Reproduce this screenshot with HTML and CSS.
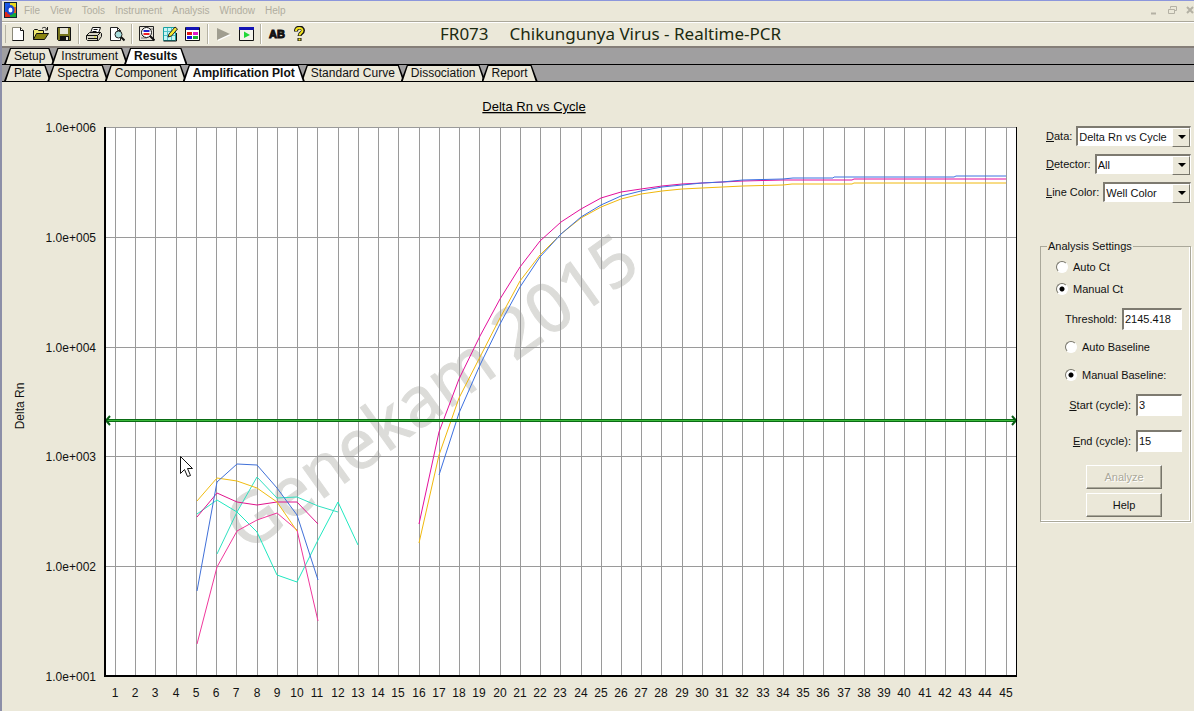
FILE: index.html
```html
<!DOCTYPE html>
<html lang="en">
<head>
    <meta charset="UTF-8">
    <meta name="viewport" content="width=device-width, initial-scale=1.0">
    <title>FR073 Chikungunya Virus - Realtime-PCR</title>
    <link rel="stylesheet" href="styles.css">
</head>
<body>
    <!-- Menu -->
    <nav class="menubar">
        <svg class="app-icon" width="13" height="16" viewBox="0 0 13 16">
            <rect width="13" height="16" fill="#123"/>
            <path d="M1 1h5v14H1z" fill="#1a58e8"/>
            <path d="M6 1h6v5H6z" fill="#e8d820"/>
            <path d="M1 10h5v5H1z" fill="#e02818"/>
            <path d="M6 10h6v5H6z" fill="#18a838"/>
            <path d="M9 5h3v6H9z" fill="#e86018"/>
            <ellipse cx="6.5" cy="8" rx="4" ry="5" fill="#1848d0"/>
            <ellipse cx="6.5" cy="8" rx="2" ry="2.500" fill="#fff"/>
        </svg>
        <button>File</button>
        <button>View</button>
        <button>Tools</button>
        <button>Instrument</button>
        <button>Analysis</button>
        <button>Window</button>
        <button>Help</button>
        <svg class="window-controls" width="44" height="12" viewBox="0 0 44 12" fill="none" stroke="#b4b1a4">
            <path d="M1 9.500h5" stroke-width="2"/>
            <path d="M20.500 4.500v-2h6v4h-2M18.500 5.500h6v4h-6z"/>
            <path d="M37 3l6 6M43 3l-6 6" stroke-width="2"/>
        </svg>
    </nav>

    <!-- Toolbar -->
    <div class="toolbar">
        <button aria-label="New">
            <svg width="16" height="16" viewBox="0 0 16 16"><path d="M2.500 1.500h8l3 3v10h-11z" fill="#fff" stroke="#8a8878"/><path d="M10.500 1.500v3h3v10h-11" fill="none" stroke="#111"/></svg>
        </button>
        <button aria-label="Open">
            <svg width="16" height="16" viewBox="0 0 16 16"><path d="M.5 13.500v-9l1-1h3l1 1h5v3" fill="#f0e870" stroke="#111"/><path d="M.5 13.500l3-6h12l-4 6z" fill="#8a8410" stroke="#111"/><path d="M9 2.500c2-2 4-1 5 1M14.500 1v3H12" fill="none" stroke="#111"/></svg>
        </button>
        <button aria-label="Save">
            <svg width="16" height="16" viewBox="0 0 16 16"><path d="M1.500 1.500h13v13h-12l-1-1z" fill="#77751c" stroke="#111"/><path d="M4 2h8v6H4z" fill="#e6e4d6"/><path d="M4 10h9v4H4z" fill="#111"/><path d="M10 11h2v3h-2z" fill="#e6e4d6"/></svg>
        </button>
        <i class="sep"></i>
        <button aria-label="Print">
            <svg width="16" height="16" viewBox="0 0 16 16"><path d="M4.500 7l2-5.500h8L12.500 7" fill="#fff" stroke="#111"/><path d="M7.500 3.500h4M6.500 5.500h4" stroke="#111"/><path d="M.5 9.500l3-3h11l1 1v3l-3 4h-11l-1-1z" fill="#d8d5c4" stroke="#111"/><path d="M.5 9.500h11l3-3M11.500 9.500v5M2 12.500h9" fill="none" stroke="#111"/><path d="M8 11h2" stroke="#dd0"/></svg>
        </button>
        <button aria-label="Print preview">
            <svg width="16" height="16" viewBox="0 0 16 16"><path d="M1.500 1.500h7l3 3v10h-10z" fill="#fff" stroke="#222"/><path d="M8.500 1.500v3h3" fill="none" stroke="#222"/><circle cx="9.500" cy="8.500" r="3.500" fill="#a8dede" stroke="#222"/><path d="M12 11l3.500 3.500" stroke="#111" stroke-width="2"/></svg>
        </button>
        <i class="sep"></i>
        <button aria-label="Zoom">
            <svg width="16" height="16" viewBox="0 0 16 16"><path d="M.5.5h14v14H.5z" fill="#e8e5da" stroke="#222"/><path d="M2 12h6M11 3h3" stroke="#777"/><circle cx="7.500" cy="6.500" r="5" fill="#fff" stroke="#111"/><path d="M4.500 5h6" stroke="#22c" stroke-width="2"/><path d="M4.500 8h6" stroke="#e22" stroke-width="2"/><path d="M11 10l4.500 4.500" stroke="#111" stroke-width="2"/></svg>
        </button>
        <button aria-label="Edit plate">
            <svg width="16" height="16" viewBox="0 0 16 16"><path d="M1.500 1.500h12v13h-12z" fill="#c8f4f4" stroke="#18a0a0"/><path d="M2 5.500h11M2 9.500h11M5.500 2v12M9.500 2v12" stroke="#50c4c8"/><path d="M6 11l1-3 6-7 2.500 2-6 7z" fill="#f4e830" stroke="#222"/><path d="M14.500 7v8h-13" fill="none" stroke="#111"/></svg>
        </button>
        <button aria-label="Table">
            <svg width="16" height="16" viewBox="0 0 16 16"><path d="M.5 1.500h14v13H.5z" fill="#fff" stroke="#111"/><path d="M1 1h13v3H1z" fill="#1414b4"/><path d="M2 6h5v3H2z" fill="#e01818"/><path d="M8 6h5v3H8z" fill="#e018c8"/><path d="M2 10h5v3H2z" fill="#1818e0"/><path d="M8 10h5v3H8z" fill="#18b030"/></svg>
        </button>
        <i class="sep"></i>
        <button aria-label="Run" disabled>
            <svg width="16" height="16" viewBox="0 0 16 16"><path d="M3 3l13 6-13 6z" fill="#fff"/><path d="M2 2l13 6-13 6z" fill="#a09e90"/></svg>
        </button>
        <button aria-label="Run window">
            <svg width="16" height="16" viewBox="0 0 16 16"><path d="M1.500 1.500h14v13h-14z" fill="#f4f4ec" stroke="#111"/><path d="M1 1h15v3H1z" fill="#1414b4"/><path d="M6 5.500l6 3.500-6 3z" fill="#20d838"/></svg>
        </button>
        <i class="sep"></i>
        <button aria-label="Rename">
            <svg width="18" height="16" viewBox="0 0 18 16"><text class="icon-ab" x="1" y="12">AB</text></svg>
        </button>
        <button aria-label="Help">
            <svg width="16" height="16" viewBox="0 0 16 16" fill="none"><path d="M5 5.500c0-5 7-5 7-1 0 3-3.500 2-3.500 5.500M8.500 12v3" stroke="#111" stroke-width="4"/><path d="M5 5c0-4 6.500-4 6.500-.5 0 2.500-3 2.500-3 5M8.500 12.500v2" stroke="#f4e420" stroke-width="2"/></svg>
        </button>
        <div class="assay">
            <span>FR073</span>
            <span>Chikungunya Virus - Realtime-PCR</span>
        </div>
    </div>

    <!-- Tabs -->
    <div class="tabs">
        <button class="tab">Setup</button>
        <button class="tab">Instrument</button>
        <button class="tab active">Results</button>
    </div>
    <div class="tabs">
        <button class="tab">Plate</button>
        <button class="tab">Spectra</button>
        <button class="tab">Component</button>
        <button class="tab active">Amplification Plot</button>
        <button class="tab">Standard Curve</button>
        <button class="tab">Dissociation</button>
        <button class="tab">Report</button>
    </div>

    <main class="content">
        <svg class="plot" viewBox="2 82 1038 629">
            <rect x="105" y="127" width="912" height="550" fill="#fff"/>
            <text class="watermark" transform="translate(247 553) rotate(-35.5)">Genekam 2015</text>
            <g id="grid" class="grid"></g>

            <!-- background noise, cycles 5 - 13 -->
            <g class="curves">
                <polyline stroke="#20e8c0" points="197,514 217,500 237,512 257,532 277,575 297,582 318,540 338,502 358,545"/>
                <polyline stroke="#30e0c0" points="217,554 237,512 257,477 277,498 297,497 318,506 338,512"/>
                <polyline stroke="#f0389c" points="197,644 217,567 237,531 257,520 277,513 297,530 318,621"/>
                <polyline stroke="#e0148c" points="197,517 217,493 237,502 257,505 277,502 297,502 318,524"/>
                <polyline stroke="#f0bc10" points="197,501 217,478 237,481 257,488 277,502 297,531"/>
                <polyline stroke="#4070d8" points="197,591 217,482 237,464 257,465 277,488 297,515 318,580"/>
            </g>

            <!-- amplification, cycles 16 - 45 -->
            <g class="curves">
                <polyline stroke="#f0b80c" points="419,543 439,455 459,398 480,357 500,318 520,281 540,255 561,234 581,218 601,207 621,199 641,194 662,191 682,189 702,188 743,186 783,185 792,184 852,184 854,183 1006,183"/>
                <polyline stroke="#e4109c" points="419,524 439,432 459,379 480,336 500,299 520,267 540,241 561,222 581,209 601,198 621,192 641,189 662,186 682,184 702,183 743,181 783,180 852,180 854,179 1006,179"/>
                <polyline stroke="#3c70e0" points="439,475 459,413 480,365 500,324 520,287 540,257 561,234 581,217 601,205 621,196 641,191 662,187 682,185 702,183 722,182 743,180 783,179 793,178 833,178 834,177 954,177 956,176 1006,176"/>
            </g>

            <!-- threshold -->
            <path d="M105 420.500h912" stroke="#0a6c14" stroke-width="3"/>
            <path d="M107 420.500h908" stroke="#3cb83c" stroke-width="1"/>
            <path d="M110 416l-4 4.500 4 4.500M1012 416l4 4.500-4 4.500" fill="none" stroke="#0a5c14" stroke-width="2"/>

            <path class="axis" d="M105 127v549h911"/>
            <path class="edge" d="M1016.500 127v550"/>

            <text class="plot-title" x="534" y="111">Delta Rn vs Cycle</text>
            <text class="y-title" transform="translate(24 406) rotate(-90)">Delta Rn</text>

            <path d="M180.500 456.500v17l4-4 3 7 3-1-3-7h5z" fill="#fff" stroke="#111"/>
        </svg>

        <form class="side">
            <div class="pick">
                <label for="data"><u>D</u>ata:</label>
                <div class="select">
                    <select id="data"><option>Delta Rn vs Cycle</option></select>
                </div>
            </div>
            <div class="pick">
                <label for="detector"><u>D</u>etector:</label>
                <div class="select">
                    <select id="detector"><option>All</option></select>
                </div>
            </div>
            <div class="pick">
                <label for="color"><u>L</u>ine Color:</label>
                <div class="select">
                    <select id="color"><option>Well Color</option></select>
                </div>
            </div>

            <fieldset>
                <legend>Analysis Settings</legend>
                <div class="option">
                    <input type="radio" name="ct" id="ct1">
                    <label for="ct1">Auto Ct</label>
                </div>
                <div class="option">
                    <input type="radio" name="ct" id="ct2" checked>
                    <label for="ct2">Manual Ct</label>
                </div>
                <div class="field">
                    <label for="threshold">Threshold:</label>
                    <input class="wide" type="text" id="threshold" value="2145.418">
                </div>
                <div class="option sub">
                    <input type="radio" name="baseline" id="base1">
                    <label for="base1">Auto Baseline</label>
                </div>
                <div class="option sub">
                    <input type="radio" name="baseline" id="base2" checked>
                    <label for="base2">Manual Baseline:</label>
                </div>
                <div class="field">
                    <label for="start"><u>S</u>tart (cycle):</label>
                    <input type="text" id="start" value="3">
                </div>
                <div class="field">
                    <label for="end"><u>E</u>nd (cycle):</label>
                    <input type="text" id="end" value="15">
                </div>
                <div class="actions">
                    <button type="button" disabled>Analyze</button>
                    <button type="button">Help</button>
                </div>
            </fieldset>
        </form>
    </main>

    <script>
        const grid = document.getElementById("grid");

        function add(name, attrs, text) {
            const el = document.createElementNS("http://www.w3.org/2000/svg", name);
            for (const key in attrs) el.setAttribute(key, attrs[key]);
            if (text) el.textContent = text;
            grid.appendChild(el);
        }

        // one vertical line per cycle
        for (let cycle = 1; cycle <= 45; cycle++) {
            const x = Math.round(115 + (cycle - 1) * 20.24);
            add("path", { d: `M${x + 0.5} 127V676` });
            add("text", { x: x, y: 697, class: "x-label" }, String(cycle));
        }

        // one horizontal line per decade
        for (let decade = 1; decade <= 6; decade++) {
            const y = Math.round(676 - (decade - 1) * 109.8);
            add("path", { d: `M105 ${y + 0.5}H1016` });
            add("text", { x: 96, y: y + 5, class: "y-label" }, "1.0e+00" + decade);
        }
    </script>
</body>
</html>
```

FILE: styles.css
```css
* {
    box-sizing: border-box;
}
body {
    margin: 0;
    min-height: 100vh;
    background-color: #ebe8d9;
    border-top: 1px solid #8c96dc;
    border-left: 2px solid #8c8fa8;
    font-family: "Liberation Sans", Arial, sans-serif;
    font-size: 11px;
    color: #111;
}
button {
    font-family: inherit;
    color: inherit;
}

/* menu */
.menubar {
    display: flex;
    align-items: center;
    gap: 10px;
    height: 21px;
    padding: 0 0 2px 2px;
    border-bottom: 1px solid #aaa79a;
}
.menubar button {
    padding: 0;
    border: none;
    background: none;
    font-size: 10px;
    color: #b0ad9f;
}
.app-icon {
    margin-right: -3px;
}
.window-controls {
    margin-left: auto;
}

/* toolbar */
.toolbar {
    display: flex;
    align-items: center;
    height: 26px;
    padding: 0 0 2px 7px;
    border-top: 1px solid #fff;
    border-bottom: 2px solid #857e78;
}
.toolbar::before {
    content: "";
    width: 1px;
    height: 18px;
    margin: 0 1px 0 -4px;
    background-color: #b5b2a3;
}
.toolbar button {
    display: flex;
    width: 23px;
    padding: 0 0 0 3px;
    border: none;
    background: none;
}
.toolbar svg {
    flex: none;
}
.sep {
    width: 2px;
    height: 20px;
    margin: 0 3px 0 2px;
    border-left: 1px solid #b5b2a3;
    border-right: 1px solid #fff;
}
.icon-ab {
    font-size: 11px;
    font-weight: bold;
    fill: #111;
    stroke: #111;
}
.assay {
    display: flex;
    gap: 21px;
    margin-left: 129px;
    font-family: "Noto Sans", "Open Sans", sans-serif;
    font-size: 17px;
    line-height: 22px;
    color: #1c2a10;
    white-space: nowrap;
}

/* tabs */
.tabs {
    display: flex;
    align-items: flex-end;
    height: 17px;
    padding-left: 2px;
    background-color: #a09fa0;
    border-bottom: 1px solid #000;
}
.tab {
    position: relative;
    isolation: isolate;
    height: 16px;
    margin-right: -4px;
    padding: 0 10px;
    border: none;
    background-color: #000;
    font-size: 12px;
    line-height: 16px;
    white-space: nowrap;
    clip-path: polygon(0 100%, 6px 0, calc(100% - 6px) 0, 100% 100%);
}
.tab::before {
    content: "";
    position: absolute;
    inset: 1px 0 0;
    z-index: -1;
    background-color: #ebe8d9;
    clip-path: polygon(2px 100%, 7px 0, calc(100% - 7px) 0, calc(100% - 2px) 100%);
}
.tab.active {
    z-index: 1;
    font-weight: bold;
}
.tab.active::before {
    background-color: #fff;
}

/* plot */
.content {
    display: flex;
    align-items: flex-start;
}
.plot {
    display: block;
    flex: 1;
    min-width: 0;
}
.grid path {
    stroke: #9a9a9a;
    shape-rendering: crispEdges;
}
.curves polyline {
    fill: none;
    stroke-width: 1;
}
.axis, .edge {
    fill: none;
    stroke: #000;
    stroke-width: 2;
    shape-rendering: crispEdges;
}
.edge {
    stroke-width: 1;
}
.x-label, .y-label, .y-title {
    font-size: 12px;
    fill: #111;
}
.x-label, .y-title, .plot-title {
    text-anchor: middle;
}
.y-label {
    text-anchor: end;
}
.plot-title {
    font-size: 13px;
    text-decoration: underline;
}
.watermark {
    font-family: "Noto Sans", "Open Sans", sans-serif;
    font-size: 69px;
    fill: #dcdcd9;
    stroke: #dcdcd9;
    stroke-width: 1;
}

/* right side */
.side {
    width: 154px;
    padding: 44px 3px 0 0;
}
.pick {
    display: flex;
    align-items: center;
    gap: 4px;
    margin: 0 0 8px 6px;
}
.select {
    position: relative;
    flex: 1;
}
select, input[type="text"] {
    border: 1px solid #fff;
    border-top: 2px solid #7d7a70;
    border-left: 2px solid #7d7a70;
    border-radius: 0;
    background-color: #fff;
    font-family: inherit;
    font-size: 11px;
    color: #111;
}
select {
    appearance: none;
    display: block;
    width: 100%;
    height: 20px;
    padding: 0 0 0 1px;
}
.select::before {
    content: "";
    position: absolute;
    top: 2px;
    right: 1px;
    width: 16px;
    height: 17px;
    border: 1px solid;
    border-color: #fff #77756a #77756a #fff;
    background-color: #ebe8d9;
    pointer-events: none;
}
.select::after {
    content: "";
    position: absolute;
    top: 9px;
    right: 5px;
    border: 4px solid transparent;
    border-top-color: #000;
    border-bottom: none;
    pointer-events: none;
}
fieldset {
    display: flex;
    flex-direction: column;
    margin: 38px 0 0;
    padding: 4px 8px 4px 15px;
    border: 1px solid #aaa89a;
    box-shadow: inset -1px -1px #fff, 1px 1px #fff;
}
legend {
    margin-left: -9px;
    padding: 0 1px;
    line-height: 12px;
}
.option {
    display: flex;
    align-items: center;
    gap: 5px;
    height: 22px;
    white-space: nowrap;
}
.sub {
    margin-left: 9px;
}
.sub + .sub {
    margin-top: 6px;
}
input[type="radio"] {
    appearance: none;
    width: 12px;
    height: 12px;
    margin: 0;
    border: 1px solid;
    border-color: #77756a #fff #fff #77756a;
    border-radius: 50%;
    background-color: #fff;
}
input[type="radio"]:checked {
    background-image: radial-gradient(circle, #000 2px, transparent 3px);
}
.field {
    display: flex;
    align-items: center;
    justify-content: flex-end;
    gap: 5px;
    margin: 8px 0 6px;
    white-space: nowrap;
}
.field input {
    width: 46px;
    height: 22px;
    padding: 0 1px 2px;
}
.field .wide {
    width: 60px;
}
.actions {
    display: flex;
    flex-direction: column;
    gap: 4px;
    width: 76px;
    margin: 7px 0 0 30px;
}
.actions button {
    height: 24px;
    padding: 0;
    border: 1px solid;
    border-color: #fff #77756a #77756a #fff;
    box-shadow: inset -1px -1px #aaa89a;
    background-color: #ebe8d9;
    font-size: 11px;
}
.actions button:disabled {
    color: #aaa89a;
    text-shadow: 1px 1px #fff;
}
```
